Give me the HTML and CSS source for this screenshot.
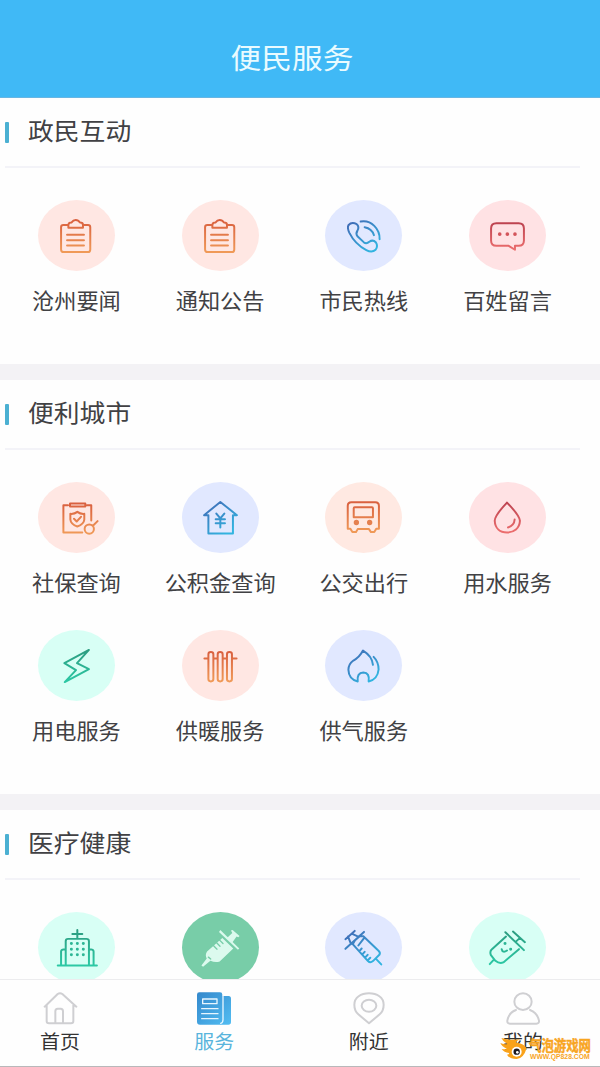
FILE: index.html
```html
<!DOCTYPE html>
<html lang="zh-CN">
<head>
<meta charset="utf-8">
<title>便民服务</title>
<link rel="stylesheet" href="styles.css">
</head>
<body>
<svg class="defs" width="0" height="0" aria-hidden="true">
  <defs>
    <linearGradient id="g-orange" x1="0" y1="0" x2="0" y2="1"><stop offset="0" stop-color="#d9603f"/><stop offset="1" stop-color="#f09a58"/></linearGradient>
    <linearGradient id="g-blue" x1="0" y1="0" x2=".7" y2="1"><stop offset="0" stop-color="#4268b4"/><stop offset="1" stop-color="#32b4e0"/></linearGradient>
    <linearGradient id="g-red" x1="0" y1="0" x2="0" y2="1"><stop offset="0" stop-color="#bd4350"/><stop offset="1" stop-color="#ec6e6e"/></linearGradient>
    <linearGradient id="g-green" x1="0" y1="0" x2="0" y2="1"><stop offset="0" stop-color="#2c9c80"/><stop offset="1" stop-color="#2cc8a4"/></linearGradient>
    <linearGradient id="g-news" x1="0" y1="0" x2="1" y2="1"><stop offset="0" stop-color="#3488cc"/><stop offset="1" stop-color="#52bdf2"/></linearGradient>
  </defs>
</svg>
<div class="app">
  <header class="topbar"><h1 class="topbar-title">便民服务</h1></header>
  <main class="content">
    <section class="panel">
      <h2 class="panel-title"><span class="txt">政民互动</span></h2>
      <div class="grid">
        <div class="item"><div class="disc peach"><svg class="ico orange" viewBox="114 29 231 214"><path d="M205 104H190Q183 104 183 111V178Q183 186 191 186H264Q271 186 271 178V111Q271 104 264 104H249M205 113V104Q206 97 214 97Q220 89 227 89Q235 89 240 97Q249 97 249 104V113ZM201 134H252M201 150H252M201 166H252"/></svg></div><span class="label">沧州要闻</span></div>
        <div class="item"><div class="disc peach"><svg class="ico orange" viewBox="114 29 231 214"><path d="M205 104H190Q183 104 183 111V178Q183 186 191 186H264Q271 186 271 178V111Q271 104 264 104H249M205 113V104Q206 97 214 97Q220 89 227 89Q235 89 240 97Q249 97 249 104V113ZM201 134H252M201 150H252M201 166H252"/></svg></div><span class="label">通知公告</span></div>
        <div class="item"><div class="disc lavender"><svg class="ico blue" viewBox="75 29 231 214"><path d="M145 105Q155 94 170 102Q179 109 172 122Q166 131 173 139L191 156Q199 163 208 155Q219 147 228 157Q235 168 227 179Q216 189 199 180Q165 162 148 128Q141 113 145 105ZM182 94Q206 90 223 107Q240 124 239 147M194 111Q216 115 222 135"/></svg></div><span class="label">市民热线</span></div>
        <div class="item"><div class="disc pink"><svg class="ico red" viewBox="508 29 231 214"><path d="M590 99H657Q673 99 673 115V151Q673 167 657 167H646V179L627 167H590Q574 167 574 151V115Q574 99 590 99Z"/><path class="dots" d="M600 132h.1M623 132h.1M646 132h.1"/></svg></div><span class="label">百姓留言</span></div>
      </div>
    </section>

    <section class="panel">
      <h2 class="panel-title"><span class="txt">便利城市</span></h2>
      <div class="grid">
        <div class="item"><div class="disc peach"><svg class="ico orange" viewBox="114 36 231 214"><path d="M204 106H190V188H247M261 106H274V152M210 101H256V110H210ZM232 126Q241 133 253 132V149Q252 163 232 170Q212 163 211 149V132Q223 133 232 126ZM222 147L230 155L243 141M279 168L293 154M282 178A14 14 0 1 1 254 178A14 14 0 1 1 282 178"/></svg></div><span class="label">社保查询</span></div>
        <div class="item"><div class="disc lavender"><svg class="ico blue" viewBox="547 36 231 214"><path d="M626 136H613L662 96L712 136H700V191H626ZM650 131L662 146L674 131M662 146V173M648 148H676M648 160H676"/></svg></div><span class="label">公积金查询</span></div>
        <div class="item"><div class="disc apricot"><svg class="ico orange" viewBox="75 36 231 214"><path d="M154 97H226Q237 97 237 108V177H229L223 187H213L207 178H173L168 187H157L151 177H143V108Q143 97 154 97ZM164 112H216Q219 112 219 115V142H161V115Q161 112 164 112Z"/><path class="lamps" d="M169 158h.1M209 158h.1"/></svg></div><span class="label">公交出行</span></div>
        <div class="item"><div class="disc pink"><svg class="ico red" viewBox="508 36 231 214"><path d="M622 98Q585 137 585 153C586 176 601 188 622 188S660 176 661 153Q660 137 622 98ZM645 149Q644 167 625 173"/></svg></div><span class="label">用水服务</span></div>
        <div class="item"><div class="disc mint"><svg class="ico green" viewBox="114 29 231 214"><path d="M267 89L193 129L228 150L194 186L267 147L231 129Z"/></svg></div><span class="label">用电服务</span></div>
        <div class="item"><div class="disc peach"><svg class="ico orange" viewBox="547 29 231 214"><path d="M614 115H626M641 115H654M669 115H682M697 115H711M626 102Q626 95 633.5 95T641 102V177Q641 184 633.5 184T626 177ZM654 102Q654 95 661.5 95T669 102V177Q669 184 661.5 184T654 177ZM682 102Q682 95 689.5 95T697 102V177Q697 184 689.5 184T682 177Z"/></svg></div><span class="label">供暖服务</span></div>
        <div class="item"><div class="disc lavender"><svg class="ico blue" viewBox="75 29 231 214"><path d="M219 134Q217 108 189 91Q178 112 160 121Q145 132 145 149Q146 178 173 184Q170 158 190 157Q210 158 206 184Q233 178 236 148Q236 125 221 110"/></svg></div><span class="label">供气服务</span></div>
      </div>
    </section>

    <section class="panel">
      <h2 class="panel-title"><span class="txt">医疗健康</span></h2>
      <div class="grid">
        <div class="item"><div class="disc mint"><svg class="ico green" viewBox="114 65 231 214"><path d="M173 226H291M197 226V153Q197 146 204 146H259Q267 146 267 153V226M183 226V184Q183 177 197 177M267 177Q281 177 281 184V226M232 119V145M217 131H247"/><path class="dots small" d="M214 160h.1M232 160h.1M250 160h.1M214 177h.1M232 177h.1M250 177h.1M214 194h.1M232 194h.1M250 194h.1"/></svg></div></div>
        <div class="item"><div class="disc jade"><svg class="ico" viewBox="547 65 231 214"><g class="solid"><path d="M668 143L701 175L660 214Q647 218 632 212L610 230L605 226L621 205Q615 194 622 184Z"/><path d="M662 119L719 175L715 179L658 125Z"/><path d="M682 143L698 128L694 121L699 119L720 137L716 141L711 139L698 157Z"/></g><path class="cuts" d="M641 166L652 177M650 157L661 168M659 149L670 160M626 201L633 207"/></svg></div></div>
        <div class="item"><div class="disc lavender"><svg class="ico blue" viewBox="75 65 231 214"><path d="M136 147L164 122M136 176L192 125M144 139L153 162M155 130L176 140M165 150L158 162L204 213Q211 220 219 213L239 193Q242 187 235 181L190 138L180 137L165 150M165 150L178 137M175 166L191 145M178 183L185 175M187 193L194 185M196 202L203 194M205 209L211 203M229 207L244 223"/></svg></div></div>
        <div class="item"><div class="disc mint"><svg class="ico green" viewBox="508 65 231 214"><path d="M617 126L673 180M640 124L676 156M661 143L648 155M619 139L575 179Q570 184 573 194L587 212Q599 222 611 217L658 177M581 210L570 222M606 177Q609 190 622 181"/><path class="dots small" d="M616 160h.1M633 177h.1"/></svg></div></div>
      </div>
    </section>
  </main>

  <nav class="tabbar">
    <div class="tab"><svg class="tab-ico" viewBox="126 300 108 108"><path d="M134 350L173 312Q180 307 187 312L229 350M140 346V394Q140 400 147 400H213Q220 400 220 394V346M166 400V364Q166 356 173 356H182Q189 356 189 364V400"/></svg><span class="tab-label">首页</span></div>
    <div class="tab active"><svg class="tab-ico" viewBox="590 300 108 108"><path class="news" d="M600 307H662Q669 307 669 314V318H688Q695 318 695 326V396Q695 404 687 404H602Q593 404 593 395V314Q593 307 600 307Z"/><path class="news-lines" d="M610 327H653V341H610ZM607 356H656M607 371H656M607 386H656M671 318V389Q671 398 664 400"/></svg><span class="tab-label">服务</span></div>
    <div class="tab"><svg class="tab-ico" viewBox="154 300 108 108"><path d="M208 400L176 373C166 364 164 356 164 344C164 322 184 310 208 310S252 322 252 344C252 356 250 364 240 373Z"/><ellipse cx="208" cy="347" rx="22" ry="18"/></svg><span class="tab-label">附近</span></div>
    <div class="tab"><svg class="tab-ico" viewBox="616 300 108 108"><ellipse cx="670" cy="335" rx="26" ry="25"/><path d="M649 360Q627 368 623 392Q622 401 631 401H710Q719 401 718 392Q713 368 691 360"/></svg><span class="tab-label">我的</span></div>
  </nav>

  <div class="watermark">
    <svg class="mascot" viewBox="0 0 96 66"><path d="M4 3Q28 11 60 7Q46 13 50 17Q74 21 80 34Q70 66 50 66Q28 66 21 53Q29 52 27 48Q12 46 5 36Q18 38 20 35Q6 29 1 18Q14 23 22 21Q9 14 4 3Z" fill="#f9a21a"/><circle cx="50" cy="44" r="15" fill="#fff"/><circle cx="50" cy="44" r="9.5" fill="#1b1820"/><circle cx="52" cy="46" r="4" fill="#fff"/></svg>
    <div class="wm-text"><span class="wm-name">气泡游戏网</span><span class="wm-url">WWW.QP828.COM</span></div>
  </div>
</div>
</body>
</html>
```
FILE: styles.css
```css
* { box-sizing: border-box; }

body {
  margin: 0;
  background: #fff;
  font-family: "Liberation Sans", "Noto Sans CJK SC", sans-serif;
  color: #414144;
}

.defs { position: absolute; }

.app {
  position: relative;
  display: flex;
  flex-direction: column;
  width: 600px;
  height: 1067px;
  overflow: hidden;
}

.topbar {
  flex: none;
  display: flex;
  align-items: center;
  justify-content: center;
  height: 98px;
  padding: 23px 16px 0 0;
  background: #40b9f6;
  border-bottom: 1px solid #68b6e3;
}

.topbar-title {
  margin: 0;
  font-size: 30.7px;
  font-weight: 400;
  line-height: 40px;
  color: #e9fbff;
  transform: scaleY(.94);
}

.content {
  flex: 1;
  min-height: 0;
  overflow: hidden;
  background: #f3f2f5;
}

.panel {
  background: #fefefe;
  margin-bottom: 16px;
}

.panel-title {
  display: flex;
  align-items: center;
  gap: 19px;
  height: 70px;
  margin: 0 20px 0 5px;
  border-bottom: 2px solid #f3f3f8;
  font-size: 25.8px;
  font-weight: 400;
}

.panel-title::before {
  content: "";
  width: 4px;
  height: 21px;
  border-radius: 1px;
  background: #4bb0d2;
}

.txt {
  margin-top: -5px;
  transform: scaleY(.94);
}

.grid {
  display: grid;
  grid-template-columns: repeat(4, 143.7px);
  row-gap: 32px;
  padding: 32px 0 48px 4.6px;
}

.item {
  display: flex;
  flex-direction: column;
  align-items: center;
  height: 116px;
}

.disc {
  width: 77px;
  height: 71px;
  border-radius: 50%;
}

.peach { background: #ffe7e3; }
.apricot { background: #ffe9e2; }
.pink { background: #ffe2e4; }
.lavender { background: #e1e8ff; }
.mint { background: #d8fff5; }
.jade { background: #78cda8; }

.ico {
  display: block;
  width: 77px;
  height: 71px;
  fill: none;
  stroke-width: 6;
  stroke-linecap: round;
  stroke-linejoin: round;
}

.orange { stroke: url(#g-orange); }
.blue { stroke: url(#g-blue); }
.red { stroke: url(#g-red); }
.green { stroke: url(#g-green); }
.dots { stroke-width: 11; stroke: #d3545a; }
.small { stroke-width: 9; stroke: #2db695; }
.lamps { stroke-width: 16; stroke: #e5804f; }
.solid { fill: #dcfaee; }
.cuts { stroke: #78cda8; stroke-width: 4; }

.label {
  margin-top: 16px;
  font-size: 22.2px;
  line-height: 30px;
  white-space: nowrap;
  transform: scaleY(.95);
}

.tabbar {
  flex: none;
  display: flex;
  justify-content: space-between;
  height: 88px;
  padding: 10px 47px 0 30px;
  background: #fefefe;
  border-top: 1px solid #ececee;
  border-bottom: 1px solid #b8b8ba;
}

.tab {
  display: flex;
  flex-direction: column;
  align-items: center;
  width: 60px;
}

.tab-ico {
  width: 36px;
  height: 36px;
  fill: none;
  stroke: #cfcfd2;
  stroke-width: 6;
  stroke-linecap: round;
  stroke-linejoin: round;
}

.news { fill: url(#g-news); stroke: none; }
.news-lines { stroke: #e8f6ff; stroke-width: 4; }

.tab-label {
  margin-top: 2px;
  font-size: 20px;
  line-height: 28px;
  color: #333;
  transform: scaleY(.95);
}

.active .tab-label { color: #58b4dc; }

.watermark {
  position: absolute;
  left: 500px;
  top: 1037px;
  display: flex;
}

.mascot { width: 32px; height: 22px; }

.wm-text {
  display: flex;
  flex-direction: column;
  margin: 2px 0 0 -3px;
  color: #f8a51f;
  font-weight: 700;
  white-space: nowrap;
}

.wm-name {
  font-size: 12.4px;
  line-height: 14px;
  transform: scaleY(1.2);
  -webkit-text-stroke: .4px #f8a51f;
}

.wm-url {
  padding-left: 1px;
  font-size: 6.8px;
  line-height: 8px;
}
```
